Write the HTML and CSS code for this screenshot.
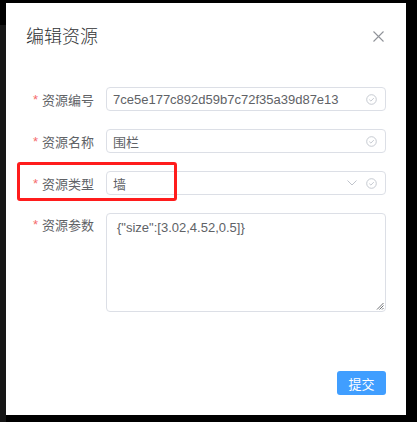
FILE: index.html
```html
<!DOCTYPE html>
<html lang="zh">
<head>
<meta charset="utf-8">
<link rel="stylesheet" href="styles.css">
</head>
<body>
<div class="stage">
  <div class="dialog">
    <div class="header">
      <span class="title">编辑资源</span>
      <span class="close"><svg width="11" height="11" viewBox="0 0 11 11"><path d="M0.5 0.5L10.5 10.5M10.5 0.5L0.5 10.5" stroke="#909399" stroke-width="1.1" fill="none"/></svg></span>
    </div>
    <div class="body">
      <div class="row">
        <label class="label"><span class="star">*</span>资源编号</label>
        <div class="input"><span class="val">7ce5e177c892d59b7c72f35a39d87e13</span><span class="icons"><svg class="ok" width="11" height="11" viewBox="0 0 11 11"><circle cx="5.5" cy="5.5" r="4.8" stroke="#c0c4cc" fill="none" stroke-width="0.9"/><path d="M3.3 5.6L4.9 7.1L7.8 4.1" stroke="#c0c4cc" fill="none" stroke-width="0.9"/></svg></span></div>
      </div>
      <div class="row">
        <label class="label"><span class="star">*</span>资源名称</label>
        <div class="input"><span class="val">围栏</span><span class="icons"><svg class="ok" width="11" height="11" viewBox="0 0 11 11"><circle cx="5.5" cy="5.5" r="4.8" stroke="#c0c4cc" fill="none" stroke-width="0.9"/><path d="M3.3 5.6L4.9 7.1L7.8 4.1" stroke="#c0c4cc" fill="none" stroke-width="0.9"/></svg></span></div>
      </div>
      <div class="row">
        <label class="label"><span class="star">*</span>资源类型</label>
        <div class="input"><span class="val">墙</span><span class="icons"><svg class="chev" width="10" height="6" viewBox="0 0 10 6"><path d="M0.5 0.5L5 5L9.5 0.5" stroke="#c0c4cc" fill="none" stroke-width="1"/></svg><svg class="ok" width="11" height="11" viewBox="0 0 11 11"><circle cx="5.5" cy="5.5" r="4.8" stroke="#c0c4cc" fill="none" stroke-width="0.9"/><path d="M3.3 5.6L4.9 7.1L7.8 4.1" stroke="#c0c4cc" fill="none" stroke-width="0.9"/></svg></span></div>
      </div>
      <div class="row">
        <label class="label top"><span class="star">*</span>资源参数</label>
        <div class="textarea"><span class="val">{"size":[3.02,4.52,0.5]}</span><svg class="grip" width="8" height="8" viewBox="0 0 8 8"><path d="M7.5 1L1 7.5M7.5 3.5L3.5 7.5M7.5 6L6 7.5" stroke="#606266" stroke-width="0.9"/></svg></div>
      </div>
    </div>
    <div class="footer">
      <button class="btn">提交</button>
    </div>
    <div class="highlight"></div>
  </div>
</div>
</body>
</html>
```

FILE: styles.css
```css
html, body {
  margin: 0;
  padding: 0;
}
body {
  width: 417px;
  height: 422px;
  background: linear-gradient(#000 0 25px, #161616 25px) 0 0 / 6px 100% no-repeat, #000;
  font-family: "Liberation Sans", "Noto Sans CJK SC", sans-serif;
  overflow: hidden;
}
.stage {
  padding: 3px 11px 7px 6px;
}
.dialog {
  position: relative;
  width: 400px;
  height: 412px;
  background: #fff;
  display: flex;
  flex-direction: column;
}
.header {
  display: flex;
  justify-content: space-between;
  align-items: center;
  padding: 20px 22px 10px 20px;
  height: 24px;
}
.title {
  font-size: 18px;
  line-height: 24px;
  color: #303133;
  font-family: "Noto Sans CJK SC", sans-serif;
  font-weight: 300;
}
.close {
  display: flex;
  margin-top: 2px;
}
.body {
  padding: 30px 20px 30px 20px;
}
.row {
  display: flex;
  align-items: flex-start;
  margin-bottom: 18px;
}
.label {
  width: 80px;
  height: 24px;
  box-sizing: border-box;
  padding-right: 12px;
  display: flex;
  justify-content: flex-end;
  align-items: center;
  font-size: 13px;
  color: #606266;
  font-family: "Noto Sans CJK SC", sans-serif;
}
.label.top {
  height: 22px;
}
.star {
  color: #f56c6c;
  margin-right: 4px;
  font-family: "Liberation Sans", sans-serif;
}
.input {
  flex: 1;
  height: 24px;
  box-sizing: border-box;
  border: 1px solid #dcdfe6;
  border-radius: 4px;
  display: flex;
  align-items: center;
  justify-content: space-between;
  padding: 0 8px 0 6px;
  font-size: 13px;
  color: #606266;
}
.val {
  white-space: nowrap;
}
.icons {
  display: flex;
  align-items: center;
  gap: 9px;
}
.chev {
  display: block;
}
.ok {
  display: block;
}
.textarea {
  position: relative;
  flex: 1;
  height: 99px;
  box-sizing: border-box;
  border: 1px solid #dcdfe6;
  border-radius: 4px;
  padding: 5px 10px;
  font-size: 13px;
  line-height: 18px;
  color: #606266;
}
.grip {
  position: absolute;
  right: 1px;
  bottom: 1px;
}
.footer {
  display: flex;
  justify-content: flex-end;
  padding: 11px 20px 20px;
}
.btn {
  width: 49px;
  height: 24px;
  border: none;
  border-radius: 3px;
  background: #409eff;
  color: #fff;
  font-size: 13px;
  font-family: "Noto Sans CJK SC", sans-serif;
  padding: 0;
}
.highlight {
  position: absolute;
  left: 11px;
  top: 159px;
  width: 160px;
  height: 39px;
  box-sizing: border-box;
  border: 3px solid #ff1c1c;
  border-radius: 3px;
}
```
